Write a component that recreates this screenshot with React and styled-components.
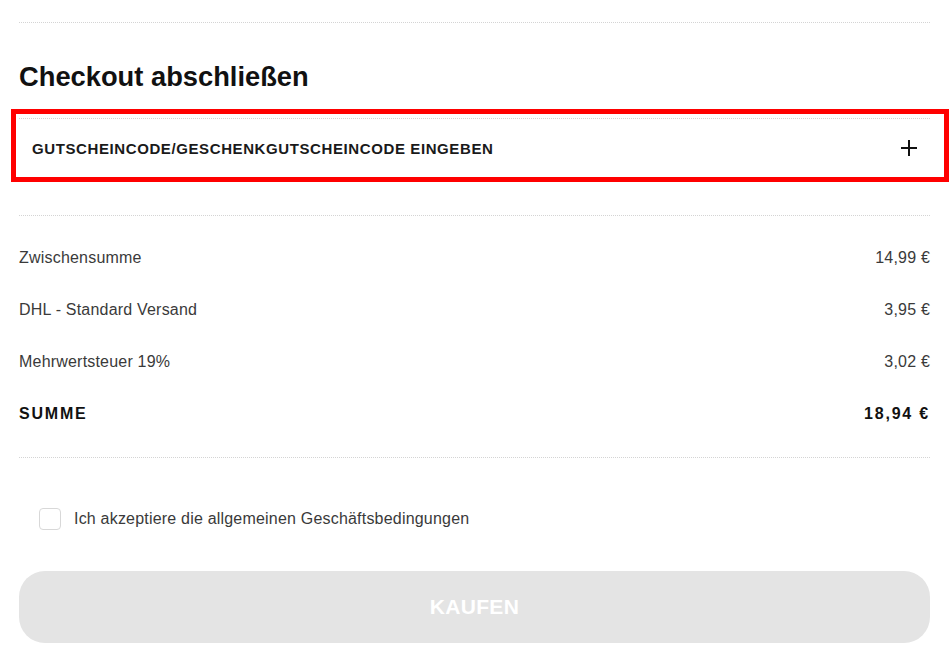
import React, { useState } from 'react'
import styled, { createGlobalStyle } from 'styled-components'

const GlobalStyle = createGlobalStyle`
  body {
    margin:0;
    background:#fff;
    font-family:"Liberation Sans", Arial, sans-serif;
    color:#333;
  }
`

const Page = styled.div`
  width:911px;
  padding:22px 0 0 19px;
  box-sizing:content-box;
`

const Divider = styled.div`
  border-top:1px dotted #d4d4d4;
`

const Heading = styled.h1`
  margin:37px 0 0 0;
  font-size:27.3px;
  line-height:34px;
  font-weight:700;
  color:#111;
`

const Highlight = styled.div`
  position:relative;
  margin-top:24px;

  &::after {
    content:'';
    position:absolute;
    top:-9px;
    left:-8px;
    right:-19px;
    bottom:-5px;
    border:5px solid #ff0000;
    pointer-events:none;
  }
`

const CouponToggle = styled.button`
  width:100%;
  height:59px;
  display:flex;
  align-items:center;
  justify-content:space-between;
  padding:0 12px 0 13px;
  box-sizing:border-box;
  background:none;
  border:none;
  border-top:1px dotted #d4d4d4;
  cursor:pointer;
  font-family:inherit;
  font-size:15px;
  font-weight:700;
  letter-spacing:0.6px;
  text-transform:uppercase;
  color:#1a1a1a;
`

const Summary = styled.div`
  margin-top:38px;
  padding:16px 0 17px;
  border-top:1px dotted #d4d4d4;
  border-bottom:1px dotted #d4d4d4;
`

const Row = styled.div`
  height:52px;
  display:flex;
  align-items:center;
  justify-content:space-between;
  font-size:16px;
  font-weight:${p => (p.total ? 700 : 400)};
  letter-spacing:${p => (p.total ? '1.8px' : '0.2px')};
  color:${p => (p.total ? '#111' : '#3a3a3a')};
`

const Terms = styled.label`
  display:flex;
  align-items:center;
  gap:13px;
  margin:50px 0 0 20px;
  font-size:16px;
  letter-spacing:0.2px;
  color:#3a3a3a;
  cursor:pointer;
`

const Check = styled.span`
  width:20px;
  height:20px;
  border:1px solid #d8d8d8;
  border-radius:4px;
  background:${p => (p.checked ? '#111' : '#fff')};
`

const BuyButton = styled.button`
  display:block;
  width:100%;
  height:72px;
  margin-top:41px;
  border:none;
  border-radius:26px;
  background:#e4e4e4;
  color:#fff;
  font-family:"Liberation Sans", Arial, sans-serif;
  font-size:21px;
  font-weight:700;
  letter-spacing:0.3px;
`

const PlusIcon = () => (
  <svg width="18" height="18" viewBox="0 0 18 18" fill="none">
    <path d="M9 1v16M1 9h16" stroke="#111" strokeWidth="2" />
  </svg>
)

const rows = [
  ['Zwischensumme', '14,99 €'],
  ['DHL - Standard Versand', '3,95 €'],
  ['Mehrwertsteuer 19%', '3,02 €'],
]

export default function App() {
  const [accepted, setAccepted] = useState(false)

  return (
    <Page>
      <GlobalStyle />
      <Divider />
      <Heading>Checkout abschließen</Heading>
      <Highlight>
        <CouponToggle>
          <span>Gutscheincode/Geschenkgutscheincode eingeben</span>
          <PlusIcon />
        </CouponToggle>
      </Highlight>
      <Summary>
        {rows.map(([label, value]) => (
          <Row key={label}>
            <span>{label}</span>
            <span>{value}</span>
          </Row>
        ))}
        <Row total>
          <span>SUMME</span>
          <span>18,94 €</span>
        </Row>
      </Summary>
      <Terms onClick={() => setAccepted(!accepted)}>
        <Check checked={accepted} />
        Ich akzeptiere die allgemeinen Geschäftsbedingungen
      </Terms>
      <BuyButton disabled={!accepted}>KAUFEN</BuyButton>
    </Page>
  )
}
